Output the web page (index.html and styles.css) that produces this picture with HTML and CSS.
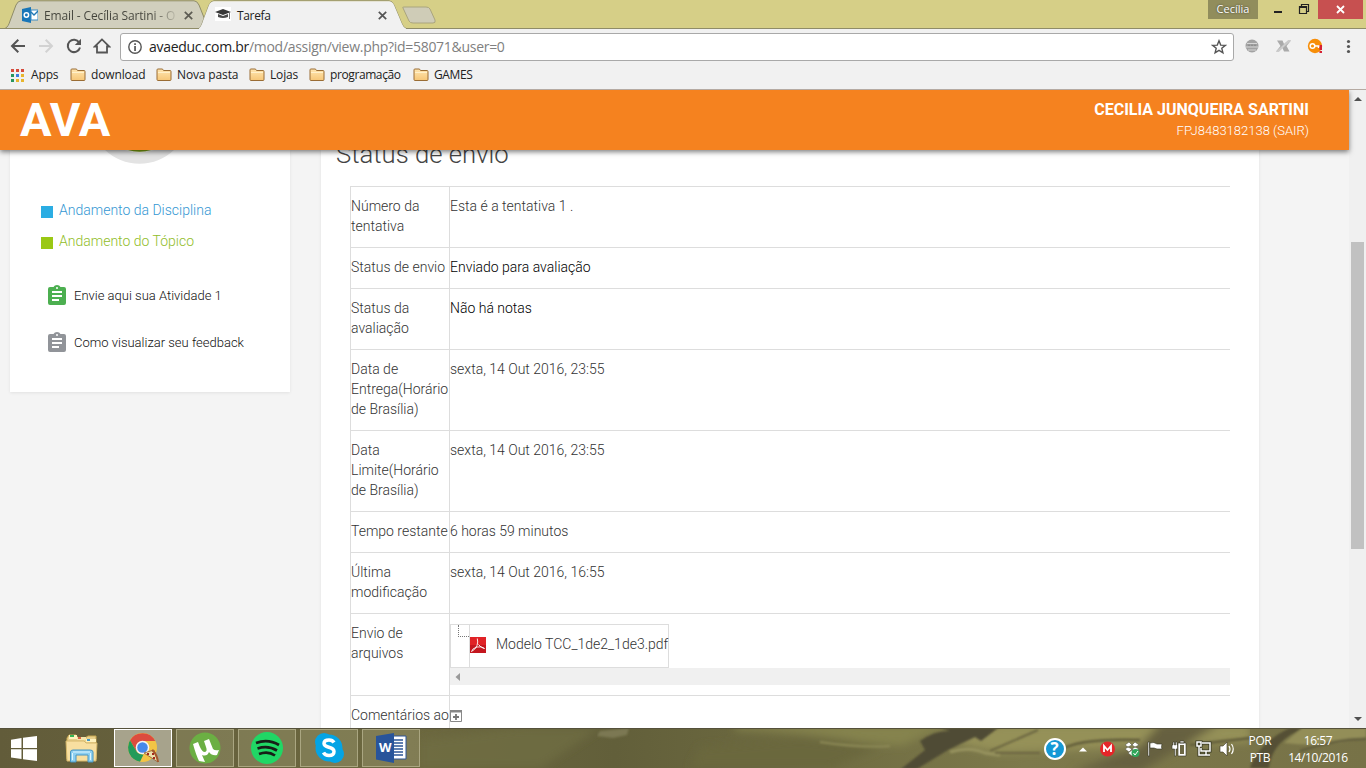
FILE: index.html
```html
<!DOCTYPE html>
<html lang="pt-BR">
<head>
<meta charset="utf-8">
<title>Tarefa</title>
<link rel="stylesheet" href="styles.css">
</head>
<body>
<div class="desktop">
  <header class="titlebar">
    <svg class="tab-shapes" width="450" height="30" viewBox="0 0 450 30">
      <path d="M5 28.5C8 27 9 24 10 21L16 5Q18 .8 21 .8H194Q197 .8 199 5L207 25L208 28.5Z" fill="#d1cfbd" stroke="#8f8c68"/>
      <path d="M403 8Q402 7 404 7H426Q429 7 430 9L435 20Q436 23 433 23H413Q410 23 409 21Z" fill="#cfccb7" stroke="#aaa57e"/>
      <path d="M0 28.5H199C201 27 202 24 203 21L209 5Q211 .8 214 .8H389Q392 .8 394 5L402 24Q403 27 406 28.5H450" fill="none" stroke="#8f8c68"/>
      <path d="M199 30V28.5C201 27 202 24 203 21L209 5Q211 1.3 214 1.3H389Q392 1.3 394 5L402 24Q403 27 406 28.5V30Z" fill="#f1f1f1"/>
    </svg>
    <div class="tab tab-mail">
      <svg width="16" height="16" viewBox="0 0 16 16"><path d="M0 2L9 0V16L0 14Z" fill="#1976b8"/><path d="M9 3H16V13H9Z" fill="#fff" stroke="#3b8cc4"/><path d="M9 5L12 8L16 4" fill="none" stroke="#2078b5" stroke-width="1.4"/><circle cx="4.4" cy="8" r="2.2" fill="none" stroke="#fff" stroke-width="1.5"/></svg>
      <span class="tab-title fade">Email - Cecília Sartini - O</span>
      <svg class="close" width="9" height="9" viewBox="0 0 9 9"><path d="M.8.8L8.2 8.2M8.2.8L.8 8.2" stroke="#5c5b52" stroke-width="1.7"/></svg>
    </div>
    <div class="tab tab-task">
      <svg width="16" height="16" viewBox="0 0 16 16"><path fill="#fff" d="M0 0H16V14H0Z"/><path d="M0 5L8 2L16 5L8 8Z" fill="#383838"/><path d="M3 7L8 9L13 7V10Q8 12 3 10Z" fill="#4b4b4b"/><path d="M14.5 5V12" stroke="#777"/></svg>
      <span class="tab-title">Tarefa</span>
      <svg class="close" width="9" height="9" viewBox="0 0 9 9"><path d="M.8.8L8.2 8.2M8.2.8L.8 8.2" stroke="#555" stroke-width="1.7"/></svg>
    </div>
    <div class="window-controls">
      <span class="profile">Cecília</span>
      <svg width="60" height="19" viewBox="0 0 60 19"><path d="M16 11h8v2h-8z" fill="#222"/><path d="M41.5 6.5H48.5V13.500H41.5ZM43.5 6V4.500H50.500V11.500H49" fill="none" stroke="#222" stroke-width="1.200"/><path d="M41 6h8v2h-8z" fill="#222"/></svg>
      <span class="window-close"><svg width="9" height="9" viewBox="0 0 9 9"><path d="M1 1L8 8M8 1L1 8" stroke="#fff" stroke-width="1.800"/></svg></span>
    </div>
  </header>

  <div class="toolbar">
    <div class="nav">
      <svg width="16" height="16" viewBox="0 0 16 16"><path d="M15 8H2.500M8.300 1.700L2 8L8.300 14.300" fill="none" stroke="#555" stroke-width="2"/></svg>
      <svg width="16" height="16" viewBox="0 0 16 16"><path d="M1 8H13.500M7.700 1.700L14 8L7.700 14.300" fill="none" stroke="#d2d2d2" stroke-width="2"/></svg>
      <svg width="16" height="16" viewBox="0 0 16 16"><path d="M13.200 4.500A6.200 6.200 0 1 0 14 9.500" fill="none" stroke="#555" stroke-width="2"/><path d="M15 .8V7H8.800Z" fill="#555"/></svg>
      <svg class="home" width="18" height="16" viewBox="0 0 18 16"><path d="M9 1.400L1.700 8.500H4V14.500H14V8.500H16.300Z" fill="none" stroke="#555" stroke-width="1.800"/></svg>
    </div>
    <div class="omnibox">
      <svg width="14" height="14" viewBox="0 0 14 14"><circle cx="7" cy="7" r="6.200" fill="none" stroke="#555" stroke-width="1.400"/><path d="M6.200 3.200h1.700v1.700H6.200zM6.200 6h1.700v5H6.200z" fill="#555"/></svg>
      <span class="url"><b>avaeduc.com.br</b>/mod/assign/view.php?id=58071&amp;user=0</span>
      <svg class="star" width="16" height="16" viewBox="0 0 16 16"><path d="M8 1.800L9.700 6.100L14.300 6.400L10.800 9.300L11.900 13.800L8 11.300L4.100 13.800L5.200 9.300L1.700 6.400L6.300 6.100Z" fill="none" stroke="#555" stroke-width="1.400"/></svg>
    </div>
    <svg class="extensions" width="130" height="20" viewBox="0 0 130 20">
      <circle cx="16" cy="10" r="6.500" fill="#a2a2a2"/><path d="M11 7.500H21M10 11H22M12 14H20" stroke="#d6d6d6"/><path d="M12 9.200H20" stroke="#888" stroke-dasharray="2 1"/>
      <path d="M41 4.500H46.500L48 8L52 4.500H55L50.500 10L53.500 15.500H48L46.500 12L43 15.500H40L44.500 10Z" fill="#aaa"/><path d="M52 4.500H55L43 15.500H40Z" fill="#ccc"/>
      <circle cx="79" cy="10" r="7.200" fill="#f78e08"/><circle cx="76.500" cy="10" r="2.300" fill="none" stroke="#fff" stroke-width="1.500"/><path d="M79 10H85M82.500 10V12" stroke="#fff" stroke-width="1.500"/><path d="M83.500 9h2.500v5h-2.500zM83.500 15h2.500v2h-2.500z" fill="#d51f35"/>
      <g fill="#555"><circle cx="112.500" cy="5.500" r="1.600"/><circle cx="112.500" cy="10.500" r="1.600"/><circle cx="112.500" cy="15.500" r="1.600"/></g>
    </svg>
  </div>

  <nav class="bookmarks">
    <span class="bookmark apps"><svg width="13" height="13" viewBox="0 0 13 13"><path d="M0 0h3v3H0zM5 0h3v3H5zM10 0h3v3h-3z" fill="#d64b3c"/><path d="M0 5h3v3H0zM0 10h3v3H0z" fill="#28955e"/><path d="M5 5h3v3H5z" fill="#3d7de0"/><path d="M10 5h3v3h-3zM5 10h3v3H5zM10 10h3v3h-3z" fill="#e8b52c"/></svg><i>Apps</i></span>
    <span class="bookmark bm-download"><svg class="folder" viewBox="0 0 16 14"><use href="#folder"/></svg><i>download</i></span>
    <span class="bookmark bm-pasta"><svg class="folder" viewBox="0 0 16 14"><use href="#folder"/></svg><i>Nova pasta</i></span>
    <span class="bookmark bm-lojas"><svg class="folder" viewBox="0 0 16 14"><use href="#folder"/></svg><i>Lojas</i></span>
    <span class="bookmark bm-prog"><svg class="folder" viewBox="0 0 16 14"><use href="#folder"/></svg><i>programação</i></span>
    <span class="bookmark"><svg class="folder" viewBox="0 0 16 14"><use href="#folder"/></svg><i class="games">GAMES</i></span>
  </nav>

  <main class="viewport">
    <div class="page">
      <header class="site-header">
        <strong class="logo">AVA</strong>
        <div class="user"><strong>CECILIA JUNQUEIRA SARTINI</strong><span>FPJ8483182138 (SAIR)</span></div>
      </header>
      <div class="content">
        <aside class="sidebar">
          <svg class="progress" width="280" height="14" viewBox="0 0 280 14"><circle cx="129.500" cy="-36" r="49.800" fill="#e3e3e3"/><circle cx="129.500" cy="-36" r="38.800" fill="#f3f5e6"/><circle cx="129.500" cy="-36" r="37.800" fill="#7fa50d"/></svg>
          <div class="legend blue"><i></i><span>Andamento da Disciplina</span></div>
          <div class="legend green"><i></i><span>Andamento do Tópico</span></div>
          <div class="activity first"><svg viewBox="0 0 18 20"><use href="#clip"/></svg><span>Envie aqui sua Atividade 1</span></div>
          <div class="activity second"><svg viewBox="0 0 18 20"><use href="#clip"/></svg><span>Como visualizar seu feedback</span></div>
        </aside>
        <section class="panel">
          <h2>Status de envio</h2>
          <table class="status">
            <tr><th>Número da tentativa</th><td>Esta é a tentativa 1 .</td></tr>
            <tr><th>Status de envio</th><td class="dark">Enviado para avaliação</td></tr>
            <tr><th>Status da avaliação</th><td class="dark">Não há notas</td></tr>
            <tr><th>Data de Entrega(Horário de Brasília)</th><td>sexta, 14 Out 2016, 23:55</td></tr>
            <tr><th>Data Limite(Horário de Brasília)</th><td>sexta, 14 Out 2016, 23:55</td></tr>
            <tr><th>Tempo restante</th><td>6 horas 59 minutos</td></tr>
            <tr><th>Última modificação</th><td>sexta, 14 Out 2016, 16:55</td></tr>
            <tr><th>Envio de arquivos</th><td class="file-cell">
              <div class="file">
                <span class="branch"><i></i></span>
                <span class="file-name"><svg width="16" height="16" viewBox="0 0 16 16"><path d="M0 0H16V16H0Z" fill="#e02226"/><path d="M0 8H16V16H0Z" fill="#c4161e"/><path d="M7.300 1.500Q8.300 5 7 8.500Q5 13 1.500 14.500Q2 11.500 7 10Q12 9 14.500 11.500Q11 11 8.500 7.500" fill="none" stroke="#fff" stroke-width=".9"/></svg><span>Modelo TCC_1de2_1de3.pdf</span></span>
              </div>
              <div class="hscroll"><svg width="5" height="8" viewBox="0 0 5 8"><path d="M5 0V8L.5 4Z" fill="#999"/></svg></div>
            </td></tr>
            <tr><th>Comentários ao</th><td><svg class="plus" width="12" height="12" viewBox="0 0 12 12"><path d="M.5.5H11.500V11.500H.5Z" fill="#fff" stroke="#888"/><path d="M0 0H12V2.500H0Z" fill="#888"/><path d="M6 4V10M3 7H9" stroke="#777" stroke-width="1.800"/></svg></td></tr>
          </table>
        </section>
      </div>
    </div>
    <div class="scrollbar">
      <svg width="8" height="4" viewBox="0 0 8 4"><path d="M0 4L4 0L8 4Z" fill="#505050"/></svg>
      <div class="thumb"></div>
      <svg class="down" width="8" height="4" viewBox="0 0 8 4"><path d="M0 0L4 4L8 0Z" fill="#505050"/></svg>
    </div>
  </main>

  <footer class="taskbar">
    <svg class="wallpaper" viewBox="0 0 1366 40" preserveAspectRatio="none">
      <defs>
        <linearGradient id="ground"><stop offset="0" stop-color="#625c3a"/><stop offset=".3" stop-color="#6c683f"/><stop offset=".45" stop-color="#625f3a"/><stop offset=".58" stop-color="#6d6a40"/><stop offset=".75" stop-color="#7d794b"/><stop offset="1" stop-color="#777247"/></linearGradient>
        <filter id="soft" x="0" y="-20%" width="100%" height="140%"><feGaussianBlur stdDeviation="1.200"/></filter>
        <filter id="softer" x="0" y="-20%" width="100%" height="140%"><feGaussianBlur stdDeviation="4"/></filter>
      </defs>
      <path fill="url(#ground)" d="M0 0H1366V40H0Z"/>
      <g filter="url(#softer)">
        <path d="M420 12L520 0H600L540 40H420Z" fill="#706e43" opacity=".7"/>
        <path d="M735 -4H950L902 18L860 14Q810 4 735 2Z" fill="#85834e"/>
        <path d="M700 19L800 10L880 20L830 40H690Z" fill="#6a673d"/>
        <path d="M940 12L1000 -4H1250V14L1000 25Z" fill="#959159"/>
        <path d="M1160 -4H1220L1140 44H1070L1137 20Z" fill="#66613f"/>
      </g>
      <g filter="url(#soft)">
        <path d="M633 3L662 0L660 7L646 10L630 8Z" transform="translate(-33 0)" fill="#7b7852"/>
        <path d="M920 13Q935 2 950 3L941 0H998L981 13L975 9L948 22L917 41H901L925 22Z" fill="#504b35"/>
        <path d="M950 24Q970 18 985 25L1000 27" fill="none" stroke="#97935e" stroke-width="3"/>
        <path d="M990 23L1038 2M995 25H1040" stroke="#6a6541" stroke-width="2"/>
        <path d="M820 14Q860 20 890 18" stroke="#8d8a56" fill="none" stroke-width="2"/>
        <path d="M1060 22Q1080 10 1140 12M1190 17L1260 9" stroke="#625d3a" stroke-width="2.500" fill="none"/>
        <path d="M1290 0H1305Q1272 12 1269 40H1250Q1259 14 1290 0Z" fill="#555036"/>
        <path d="M1302 0H1366V9Q1330 20 1284 15Z" fill="#938e59"/>
        <path d="M1300 23Q1340 10 1366 11" stroke="#625d3c" stroke-width="2.500" fill="none"/>
      </g>
      <path d="M0 .5H1366" stroke="#55513b"/>
    </svg>
    <svg class="start" width="26" height="25" viewBox="0 0 26 25"><path d="M0 3.700L10.500 2V12H0ZM12 1.800L26 0V12H12ZM0 13.300H10.500V23L0 21.500ZM12 13.300H26V25L12 23.300Z" fill="#fff"/></svg>
    <svg class="explorer" width="33" height="31" viewBox="0 0 33 31"><path d="M2 5L4 2H11L13 5H20L23 3H31V26H2Z" fill="#e9d08b" stroke="#c7a650"/><path d="M4 2h8v4H4z" fill="#fff4be"/><path d="M5 2h4v2H5z" fill="#36b657"/><path d="M12 4h9v3h-9z" fill="#f3e4ab"/><path d="M13 4h3v2h-3z" fill="#d66542"/><path d="M21 6h10v3h-10z" fill="#fff1bc"/><path d="M22 6h3v2h-3z" fill="#4297c5"/><path d="M1 8H19L21 10H32L31 28H2Z" fill="#f8dfa0" stroke="#d5b76a"/><path d="M5.500 29V19Q5.500 17 8 17H25Q28 17 28 19V29H23V22H11V29Z" fill="#8dcff0" stroke="#4694c2" stroke-width="1"/><path d="M7.500 20V27M25.500 20V27M8 19H25" stroke="#dcf5ff"/></svg>
    <div class="tasks">
      <span class="task active"><svg width="32" height="32" viewBox="0 0 32 32"><circle cx="15.500" cy="15.500" r="14.500" fill="#f3c445"/><path d="M15.500 15.500L9.200 19L3 8.300A14.500 14.500 0 0 1 28.300 9H15.500Z" fill="#dc4c3f"/><path d="M3 8.300L9.500 19.500Q12 23 16.500 22.500L13 29.800A14.500 14.500 0 0 1 3 8.300Z" fill="#229b5a"/><circle cx="15.500" cy="15.500" r="6.800" fill="#f5f5f5"/><circle cx="15.500" cy="15.500" r="5.300" fill="#4689e9"/><path d="M17 21L27 18L31 30Z" fill="#eee0ad" stroke="#8d562e" stroke-width=".8"/><path d="M25 18Q30 22 31 30" stroke="#a4572c" stroke-width="2" fill="none"/><path d="M20 21h2v2h-2zM25 21h2v2h-2zM26 25h2v2h-2z" fill="#a4291d"/></svg></span>
      <span class="task"><svg width="32" height="32" viewBox="0 0 32 32"><circle cx="16" cy="16" r="15.500" fill="#6baf43"/><path d="M4 12L9 10Q12 19 15 20Q19 20 17 15L15 9L20 7L24 17Q26 19 30 18L28 23Q23 24 20 20Q18 25 13 23L16 30L10 29Q7 23 4 12Z" fill="#fff"/></svg></span>
      <span class="task"><svg width="32" height="32" viewBox="0 0 32 32"><circle cx="16" cy="16" r="16" fill="#20d765"/><path d="M5 11Q17 6.500 28 13M6.500 16.500Q17 13 26 18.500M8 22Q17 18.500 24 23.500" fill="none" stroke="#171e17" stroke-width="2.700"/></svg></span>
      <span class="task"><svg width="32" height="32" viewBox="0 0 32 32"><circle cx="11" cy="10" r="9" fill="#04a4e5"/><circle cx="22" cy="22" r="9" fill="#04a4e5"/><circle cx="16" cy="16" r="13.500" fill="#04a4e5"/><path d="M21 10.500Q19.500 8 16 8Q11 8 11 11.500C11 16.500 21 14 21 19.500Q21 23.500 16 23.500Q12 23.500 10.500 20.500" fill="none" stroke="#fff" stroke-width="3.500"/></svg></span>
      <span class="task"><svg width="32" height="32" viewBox="0 0 32 32"><path d="M16 4H31V27H16Z" fill="#fff" stroke="#2c5598"/><path d="M19 8H28M19 11H28M19 14H28M19 17H28M19 20H28M19 23H28" stroke="#2c5598" stroke-width="1.500"/><path d="M1 4L19 1V31L1 27.500Z" fill="#28549a"/><text x="4" y="20" class="word-letter">W</text></svg></span>
    </div>
    <div class="tray">
      <svg class="tray-icons" width="230" height="32" viewBox="0 0 230 32">
        <circle cx="27" cy="16" r="10" fill="#1598d5" stroke="#fff" stroke-width="2"/><text x="22.500" y="22" class="help-mark">?</text>
        <path d="M51 18.500L55 14.500L59 18.500Z" fill="#fff"/>
        <circle cx="79.500" cy="16" r="7.500" fill="#e52629"/><path d="M76 19V13L79.500 17L83 13V19" fill="none" stroke="#fff" stroke-width="1.800"/>
        <path d="M97 12L101 9L104 12L100 14ZM104 12L107 9L111 12L107 14ZM97 16L100 14L104 16L101 19ZM104 16L107 14L111 16L107 19ZM100 20L104 17L108 20L104 23Z" fill="#fff" stroke="#444733" stroke-width=".5"/><circle cx="107.500" cy="20" r="4" fill="#2fa65a"/><path d="M105.500 20L107 22L110 18" stroke="#fff" fill="none"/>
        <g stroke="#333421" stroke-width=".6" fill="#fff"><path d="M120 9H121.500V23H120ZM122 10Q126 8.500 129 11L134 11Q133 14 134 16H129L126 15H122Z"/><path d="M150 10H158V23H150ZM152 8H156V10H152Z"/><path d="M145 9H146.500V12H147.500V9H149V12H149.500V16H148V23H146.500V16H144V12H145Z"/></g><path d="M152 12h4v9h-4z" fill="#6c6845"/>
        <g fill="none" stroke="#333421" stroke-width="3"><path d="M174 10H182V18H173V15M174 22H182M178 18V22M169 9H173V13H169ZM171 13V22H174"/></g>
        <g fill="none" stroke="#fff" stroke-width="1.500"><path d="M174 10H182V18H173V15M174 22H182M178 18V22M169 9H173V13H169ZM171 13V22H174"/></g>
        <path d="M192 13H195L199 9V23L195 19H192Z" fill="#fff" stroke="#393827" stroke-width=".6"/><path d="M201 13Q203 16 201 19M203.500 11Q207 16 203.500 21" stroke="#fff" fill="none" stroke-width="1.200"/>
      </svg>
      <div class="lang"><span>POR</span><span>PTB</span></div>
      <div class="clock"><span>16:57</span><span class="date">14/10/2016</span></div>
    </div>
  </footer>
</div>
<svg class="symbols" width="0" height="0">
  <linearGradient id="paper" x2="0" y2="1"><stop stop-color="#ffe6b1"/><stop offset="1" stop-color="#f6c677"/></linearGradient>
  <symbol id="folder" viewBox="0 0 16 14"><path d="M1 3V1.800Q1 1 2 1H6Q7 1 7.500 2.500H14Q15 2.500 15 3.500V11.500Q15 12.500 14 12.500H2Q1 12.500 1 11.500Z" fill="url(#paper)" stroke="#9a6d35"/><path d="M2 4.500H14" stroke="#fff0ca"/></symbol>
  <symbol id="clip" viewBox="0 0 18 20"><path d="M2 2H5.500Q6.500 0 9 0T12.500 2H16Q18 2 18 4V18Q18 20 16 20H2Q0 20 0 18V4Q0 2 2 2Z"/><circle cx="9" cy="3" r="1" fill="#fff"/><path d="M4 7H14M4 11H14M4 15H11" stroke="#fff" stroke-width="2"/></symbol>
</svg>
</body>
</html>
```
FILE: styles.css
```css
* { box-sizing: border-box; }
body { margin: 0; overflow: hidden; font-family: Roboto, sans-serif; }
svg { display: block; flex: none; }
i { font-style: normal; }
.symbols { position: absolute; }
.desktop { width: 1366px; height: 768px; display: flex; flex-direction: column; }

.titlebar { position: relative; height: 29px; display: flex; background: #d6cf87; border-bottom: 1px solid #8f8c68; font-family: "Open Sans", sans-serif; font-size: 12px; }
.tab-shapes { position: absolute; left: 0; top: 0; }
.tab { position: relative; height: 28px; display: flex; align-items: center; padding-top: 2px; }
.tab-mail { width: 193px; margin-left: 22px; color: #504f45; }
.tab-task { width: 172px; color: #222; }
.tab-title { margin-left: 6px; white-space: nowrap; letter-spacing: -.13px; }
.tab-task .tab-title { letter-spacing: -.35px; }
.fade { background: linear-gradient(90deg, #44443c 82%, #bbb9a8); background-clip: text; color: transparent; }
.close { margin-left: auto; }
.tab-mail .close { margin-right: 22px; }
.window-controls { margin-left: auto; display: flex; height: 19px; }
.profile { width: 50px; background: #918d5c; color: #fff; text-align: center; line-height: 18px; font-size: 11px; text-shadow: 0 0 2px #333; }
.window-close { width: 45px; background: #c75050; display: flex; align-items: center; justify-content: center; margin-right: 3px; }

.toolbar { height: 33px; display: flex; align-items: center; background: #f1f1f1; }
.nav { width: 120px; display: flex; gap: 12px; padding-left: 10px; }
.home { margin-left: -1px; }
.omnibox { width: 1114px; height: 28px; margin-top: 3px; display: flex; align-items: center; padding: 0 6px 0 7px; background: #fff; border: 1px solid #a9a9a9; border-radius: 3px; }
.url { margin-left: 7px; font: 14px/20px "Open Sans", sans-serif; color: #808080; letter-spacing: -.29px; }
.url b { font-weight: 400; color: #222; }
.star { margin-left: auto; }
.extensions { margin-left: 2px; }
.bookmarks { height: 28px; display: flex; padding-left: 11px; align-items: center; background: #f1f1f1; border-bottom: 1px solid #b5aaa2; font: 12px/16px "Open Sans", sans-serif; color: #222; }
.bookmark { display: flex; align-items: center; gap: 5px; white-space: nowrap; letter-spacing: -.14px; }
.bookmark i { margin-top: -2px; }
.bookmark svg { margin-top: -1px; }
.folder { width: 16px; height: 14px; }
.apps { width: 59px; gap: 7px; }
.bm-download { width: 86px; }
.bm-pasta { width: 93px; }
.bm-lojas { width: 60px; }
.bm-prog { width: 104px; }
.bm-prog i { letter-spacing: -.4px; }
.games { letter-spacing: -.4px; }

.viewport { height: 638px; display: flex; overflow: hidden; }
.page { width: 1349px; background: #f4f4f4; }
.site-header { position: relative; z-index: 2; height: 60px; background: #f5821f; color: #fff; display: flex; justify-content: space-between; padding: 0 40px 0 20px; box-shadow: 0 2px 5px rgba(0,0,0,.5); }
.logo { font-size: 47px; line-height: 59px; font-weight: 700; }
.user { display: flex; flex-direction: column; align-items: flex-end; padding-top: 10px; }
.user strong { font-size: 16px; line-height: 20px; }
.user span { font-size: 13px; line-height: 20px; font-weight: 300; margin-top: 1px; }
.content { height: 578px; display: flex; align-items: flex-start; gap: 31px; padding-left: 10px; overflow: hidden; }
.sidebar { width: 280px; height: 242px; background: #fff; box-shadow: 0 1px 3px rgba(0,0,0,.08); }
.progress { margin-bottom: 36px; }
.legend { height: 20px; display: flex; align-items: center; gap: 6px; padding-left: 31px; font-size: 14px; font-weight: 300; margin-bottom: 11px; }
.legend i { width: 12px; height: 12px; background: currentColor; margin-top: 4px; }
.blue span { color: #3597d3; }
.blue i { background: #2badE3; }
.green span { color: #91bd29; }
.green i { background: #9ac814; }
.activity { display: flex; align-items: center; height: 20px; gap: 8px; padding-left: 38px; font-size: 13px; font-weight: 300; color: #111; }
.activity svg { width: 18px; height: 20px; }
.first { margin-top: 34px; fill: #4caf50; }
.second { margin-top: 27px; fill: #919499; }

.panel { width: 938px; height: 578px; background: #fff; box-shadow: 0 1px 3px rgba(0,0,0,.08); overflow: hidden; }
h2 { margin: -10px 0 18px 15px; font-size: 25.7px; line-height: 28px; font-weight: 300; color: #444; }
.status { width: 880px; margin-left: 29px; border-collapse: collapse; table-layout: fixed; font-size: 14px; line-height: 20px; font-weight: 300; color: #333; }
.status th, .status td { padding: 9px 0 11px; border-top: 1px solid #ddd; vertical-align: top; text-align: left; font-weight: 300; }
.status th { width: 99px; border-left: 1px solid #ddd; }
.status td { border-left: 1px solid #ddd; }
.status .file-cell { padding: 10px 0; }
.status .dark { color: #000; }
.file { width: 219px; height: 44px; display: flex; border: 1px solid #ddd; }
.branch { width: 19px; border-right: 1px solid #ddd; padding-left: 7px; }
.branch i { display: block; width: 11px; height: 12px; border-left: 1px dotted #777; border-bottom: 1px dotted #777; }
.file-name { display: flex; align-items: center; gap: 10px; height: 40px; white-space: nowrap; }
.file-name span { margin-top: -2px; }
.hscroll { height: 17px; background: #f0f0f0; padding: 5px 0 0 5px; }
.plus { margin-top: 5px; }
.scrollbar { width: 17px; background: #f0f0f0; display: flex; flex-direction: column; align-items: center; padding: 7px 0; }
.thumb { width: 13px; height: 307px; margin-top: 141px; background: #c1c1c1; }
.down { margin-top: auto; }

.taskbar { position: relative; height: 40px; display: flex; align-items: center; }
.wallpaper { position: absolute; left: 0; top: 0; width: 1366px; height: 40px; }
.start, .explorer, .tasks, .tray { position: relative; }
.start { margin-left: 11px; }
.explorer { margin-left: 28px; }
.tasks { display: flex; gap: 4px; margin-left: 16px; }
.task { width: 58px; height: 38px; display: flex; align-items: center; justify-content: center; background: rgba(170,167,126,.34); border: 1px solid #aaa681; }
.task.active { background: #a7a38c; border: 1px solid #fff; }
.word-letter { font: bold 13px "Open Sans", sans-serif; fill: #fff; }
.help-mark { font: bold 17px "Open Sans", sans-serif; fill: #fff; }
.tray { height: 40px; margin-left: auto; display: flex; color: #fff; font: 12px/17px "Open Sans", sans-serif; padding-right: 16px; }
.tray-icons { margin: 5px -1px 0 1px; }
.lang, .clock { display: flex; flex-direction: column; align-items: center; padding-top: 4px; letter-spacing: -.4px; }
.lang { width: 28px; margin-left: -11px; }
.clock { width: 64px; margin-left: 12px; }
```
